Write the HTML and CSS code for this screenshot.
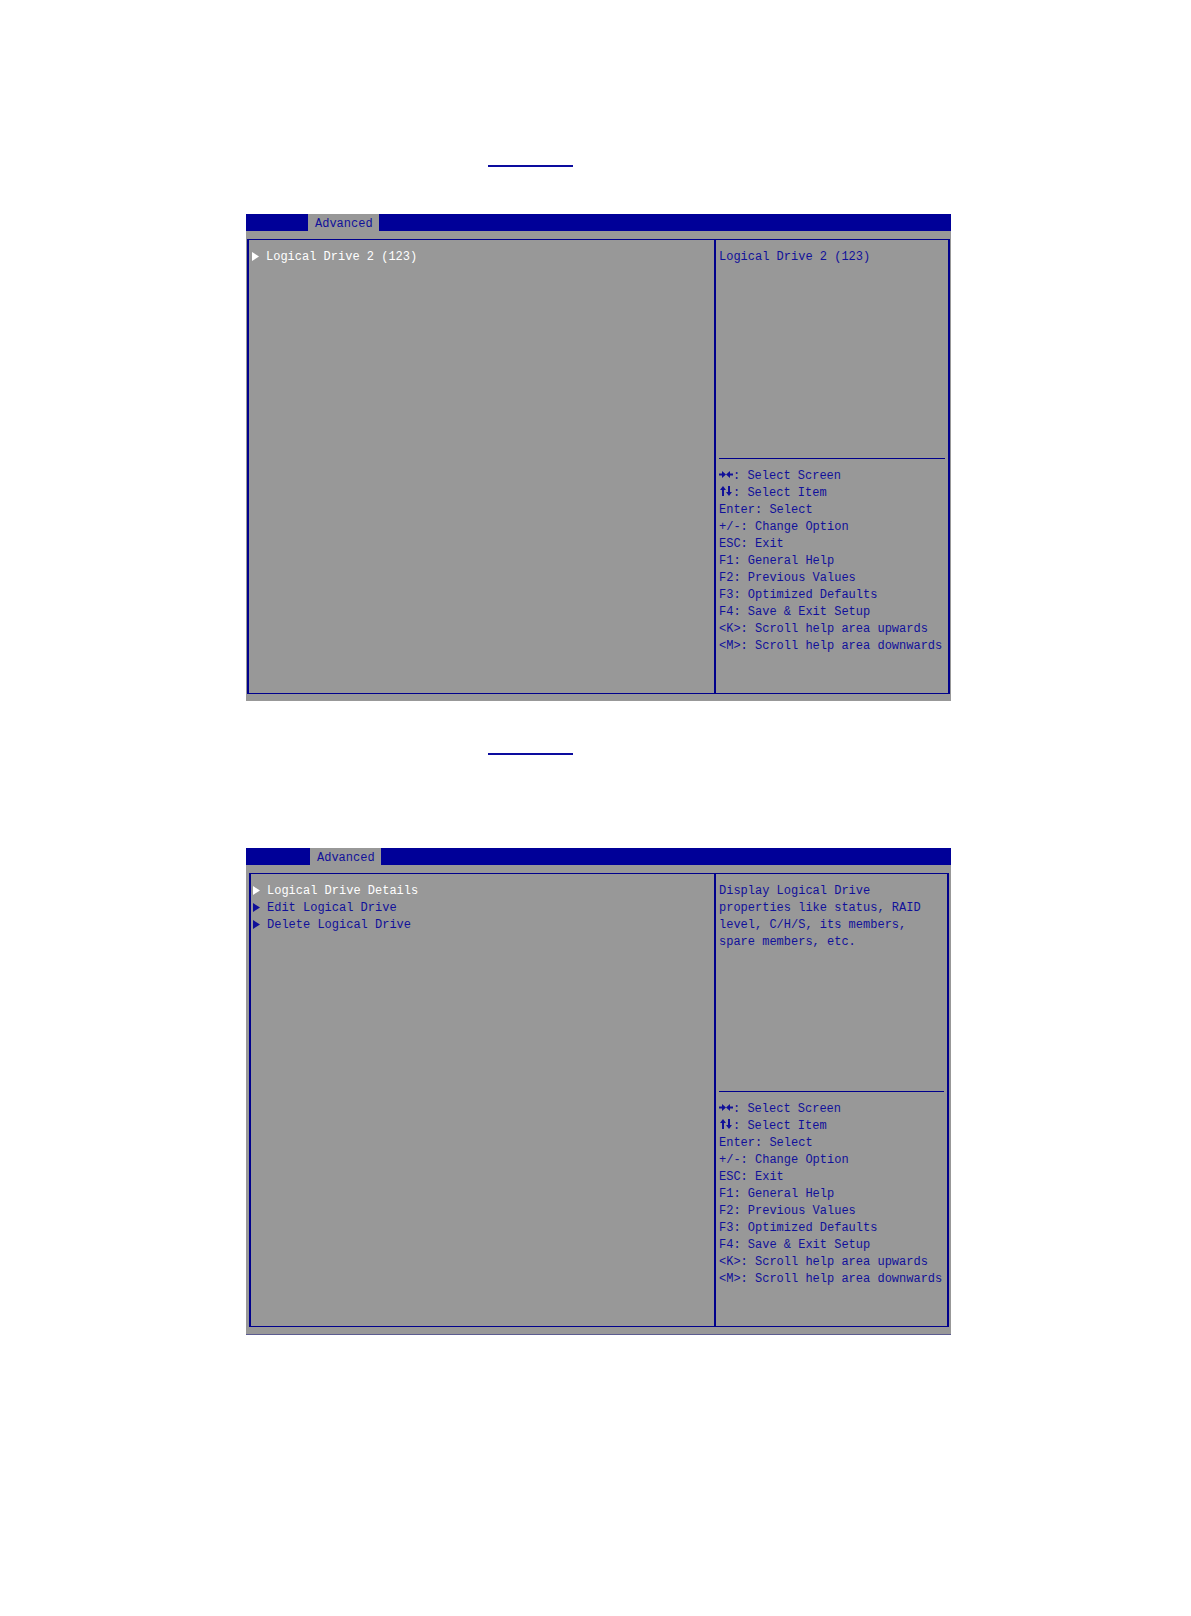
FILE: index.html
```
<!DOCTYPE html>
<html lang="en">
<head>
    <meta charset="UTF-8">
    <meta name="viewport" content="width=device-width, initial-scale=1.0">
    <title>Logical Drive Setup</title>
    <link rel="stylesheet" href="styles.css">
</head>
<body>
    <main class="page">
        <p class="caption"><a href="#drives" class="figure-link" aria-label="Drive list"></a></p>

        <section class="screen" id="drives">
            <nav class="menu-bar">
                <button type="button" class="tab">Advanced</button>
            </nav>
            <div class="panels">
                <div class="options">
                    <button type="button" class="option selected"><svg class="marker" viewBox="0 0 7 11"><path d="M0 0L7 4.5L0 9Z"/></svg>Logical Drive 2 (123)</button>
                </div>
                <aside class="side">
                    <p class="help-text">Logical Drive 2 (123)</p>
                    <ul class="keys">
                        <li><svg class="arrows" viewBox="0 0 14 11"><path d="M0 4.5H3V2L7 5.5L3 9V6.5H0ZM14 4.5H11V2L7 5.5L11 9V6.5H14Z"/></svg>: Select Screen</li>
                        <li><svg class="arrows" viewBox="0 0 14 11"><path d="M3 10V4H1L4 0L7 4H5V10ZM9 0V6H7L10 10L13 6H11V0Z"/></svg>: Select Item</li>
                        <li>Enter: Select</li>
                        <li>+/-: Change Option</li>
                        <li>ESC: Exit</li>
                        <li>F1: General Help</li>
                        <li>F2: Previous Values</li>
                        <li>F3: Optimized Defaults</li>
                        <li>F4: Save &amp; Exit Setup</li>
                        <li>&lt;K&gt;: Scroll help area upwards</li>
                        <li>&lt;M&gt;: Scroll help area downwards</li>
                    </ul>
                </aside>
            </div>
        </section>

        <p class="caption"><a href="#drive-menu" class="figure-link" aria-label="Drive menu"></a></p>

        <section class="screen screen-menu" id="drive-menu">
            <nav class="menu-bar">
                <button type="button" class="tab">Advanced</button>
            </nav>
            <div class="panels">
                <div class="options">
                    <button type="button" class="option selected"><svg class="marker" viewBox="0 0 7 11"><path d="M0 0L7 4.5L0 9Z"/></svg>Logical Drive Details</button>
                    <button type="button" class="option"><svg class="marker" viewBox="0 0 7 11"><path d="M0 0L7 4.5L0 9Z"/></svg>Edit Logical Drive</button>
                    <button type="button" class="option"><svg class="marker" viewBox="0 0 7 11"><path d="M0 0L7 4.5L0 9Z"/></svg>Delete Logical Drive</button>
                </div>
                <aside class="side">
                    <p class="help-text">Display Logical Drive<br>properties like status, RAID<br>level, C/H/S, its members,<br>spare members, etc.</p>
                    <ul class="keys">
                        <li><svg class="arrows" viewBox="0 0 14 11"><path d="M0 4.5H3V2L7 5.5L3 9V6.5H0ZM14 4.5H11V2L7 5.5L11 9V6.5H14Z"/></svg>: Select Screen</li>
                        <li><svg class="arrows" viewBox="0 0 14 11"><path d="M3 10V4H1L4 0L7 4H5V10ZM9 0V6H7L10 10L13 6H11V0Z"/></svg>: Select Item</li>
                        <li>Enter: Select</li>
                        <li>+/-: Change Option</li>
                        <li>ESC: Exit</li>
                        <li>F1: General Help</li>
                        <li>F2: Previous Values</li>
                        <li>F3: Optimized Defaults</li>
                        <li>F4: Save &amp; Exit Setup</li>
                        <li>&lt;K&gt;: Scroll help area upwards</li>
                        <li>&lt;M&gt;: Scroll help area downwards</li>
                    </ul>
                </aside>
            </div>
        </section>
    </main>
</body>
</html>
```

FILE: styles.css
```
* {
    box-sizing: border-box;
}
body {
    margin: 0;
    background-color: #fff;
    font-family: "Liberation Mono", monospace;
    font-size: 12px;
    line-height: 17px;
    color: #10109a;
}
.page {
    padding: 133px 240px 80px 246px;
}
button {
    border: 0;
    background: none;
    font: inherit;
    color: inherit;
    text-align: left;
    cursor: pointer;
}

/* links above each screen */
.caption {
    display: flex;
    height: 34px;
    margin: 0 0 47px;
    padding-left: 242px;
}
.figure-link {
    width: 85px;
    border-bottom: 2px solid #0c0c9e;
}

/* setup screen */
.screen {
    display: flex;
    flex-direction: column;
    min-height: 487px;
    padding: 0 1px 7px;
    background-color: #989898;
}
.screen + .caption {
    height: 54px;
    margin-bottom: 93px;
}
.menu-bar {
    display: flex;
    height: 17px;
    margin: 0 -1px 8px;
    padding-left: 62px;
    background-color: #000098;
}
.tab {
    padding: 2px 6px 0 7px;
    background-color: #989898;
}
.panels {
    display: flex;
    flex: 1;
    border: 2px solid #00008c;
    border-width: 1px 2px;
}
.options {
    display: flex;
    flex: 1;
    flex-direction: column;
    align-items: flex-start;
    padding: 9px 3px;
}
.option {
    display: flex;
    align-items: center;
    gap: 7px;
    padding: 0;
}
.option.selected {
    color: #fff;
}
.marker {
    width: 7px;
    height: 11px;
    fill: currentColor;
}
.side {
    display: flex;
    flex-direction: column;
    width: 234px;
    padding: 0 3px;
    border-left: 2px solid #00008c;
}
.help-text {
    flex: 1;
    margin: 0;
    padding-top: 9px;
}
.keys {
    min-height: 235px;
    margin: 0;
    padding: 9px 0 0;
    border-top: 1px solid #00008c;
    list-style: none;
}
.arrows {
    width: 14px;
    height: 11px;
    vertical-align: -1px;
    fill: currentColor;
}

/* the drive menu screen has a slightly narrower frame */
.screen-menu {
    padding: 0 2px 7px 3px;
    border-bottom: 1px solid #5c5c90;
}
.screen-menu .menu-bar {
    margin: 0 -2px 8px -3px;
    padding-left: 64px;
}
.screen-menu .options {
    padding: 9px 2px;
}
.screen-menu .side {
    width: 233px;
}

@media (max-width: 900px) {
    .page {
        padding-right: 20px;
        padding-left: 20px;
    }
}
```
